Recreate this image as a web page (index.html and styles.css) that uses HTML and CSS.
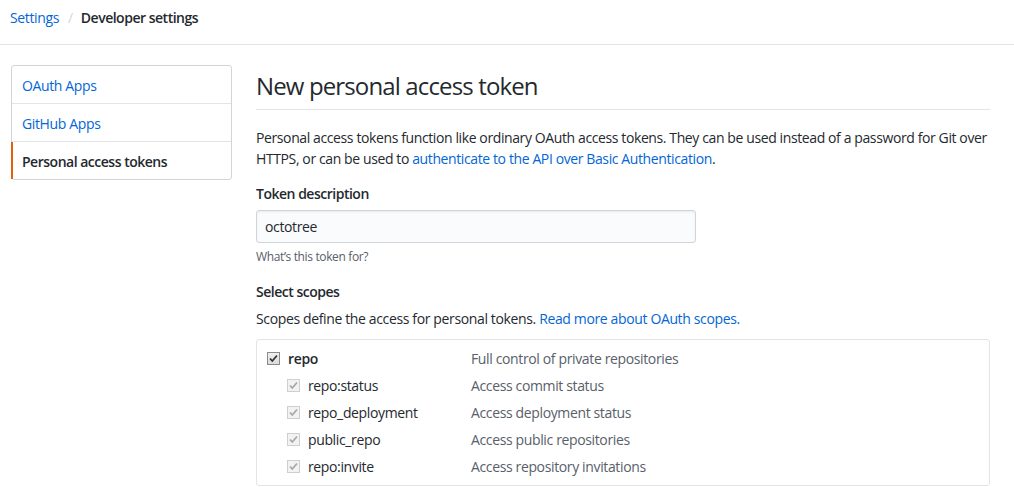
FILE: index.html
```html
<!DOCTYPE html>
<html>
<head>
<meta charset="utf-8">
<link rel="stylesheet" href="styles.css">
</head>
<body>
<div class="crumbs">
  <a class="crumb-link" href="#">Settings</a>
  <span class="sep">/</span>
  <span class="crumb-current">Developer settings</span>
</div>
<div class="layout">
  <nav class="menu">
    <a class="menu-item" href="#">OAuth Apps</a>
    <a class="menu-item" href="#">GitHub Apps</a>
    <a class="menu-item selected" href="#">Personal access tokens</a>
  </nav>
  <main class="main">
    <h2 class="title">New personal access token</h2>
    <p class="lead">Personal access tokens function like ordinary OAuth access tokens. They can be used instead of a password for Git over HTTPS, or can be used to <a href="#">authenticate to the API over Basic Authentication</a>.</p>
    <div class="field">
      <label class="label">Token description</label>
      <div class="input">octotree</div>
      <p class="note">What’s this token for?</p>
    </div>
    <div class="field">
      <label class="label">Select scopes</label>
      <p class="scope-help">Scopes define the access for personal tokens. <a href="#">Read more about OAuth scopes.</a></p>
    </div>
    <div class="scopes">
      <div class="scope-row">
        <span class="scope-name main-scope"><span class="cb"><svg viewBox="0 0 13 13" width="13" height="13"><path d="M3 6.5 L5.3 9 L10 3.5" fill="none" stroke="#333" stroke-width="1.8"/></svg></span>repo</span>
        <span class="scope-desc">Full control of private repositories</span>
      </div>
      <div class="scope-row">
        <span class="scope-name sub"><span class="cb dis"><svg viewBox="0 0 13 13" width="13" height="13"><path d="M3 6.5 L5.3 9 L10 3.5" fill="none" stroke="#a8a8a8" stroke-width="1.8"/></svg></span>repo:status</span>
        <span class="scope-desc">Access commit status</span>
      </div>
      <div class="scope-row">
        <span class="scope-name sub"><span class="cb dis"><svg viewBox="0 0 13 13" width="13" height="13"><path d="M3 6.5 L5.3 9 L10 3.5" fill="none" stroke="#a8a8a8" stroke-width="1.8"/></svg></span>repo_deployment</span>
        <span class="scope-desc">Access deployment status</span>
      </div>
      <div class="scope-row">
        <span class="scope-name sub"><span class="cb dis"><svg viewBox="0 0 13 13" width="13" height="13"><path d="M3 6.5 L5.3 9 L10 3.5" fill="none" stroke="#a8a8a8" stroke-width="1.8"/></svg></span>public_repo</span>
        <span class="scope-desc">Access public repositories</span>
      </div>
      <div class="scope-row">
        <span class="scope-name sub"><span class="cb dis"><svg viewBox="0 0 13 13" width="13" height="13"><path d="M3 6.5 L5.3 9 L10 3.5" fill="none" stroke="#a8a8a8" stroke-width="1.8"/></svg></span>repo:invite</span>
        <span class="scope-desc">Access repository invitations</span>
      </div>
    </div>
  </main>
</div>
</body>
</html>
```

FILE: styles.css
```css
* { box-sizing: border-box; }
html, body { margin: 0; padding: 0; background: #fff; }
body {
  font-family: "Open Sans", "Noto Sans", sans-serif;
  font-size: 14px;
  letter-spacing: -0.026em;
  color: #24292e;
  line-height: 1.5;
  overflow: hidden;
}
a { color: #0366d6; text-decoration: none; }
.crumbs {
  height: 45px;
  border-bottom: 1px solid #e1e4e8;
  padding: 6px 10px 0;
  font-size: 14px;
  line-height: 24px;
  display: flex;
}
.crumb-link { color: #0366d6; }
.sep { color: #d1d5da; margin: 0 8px 0 9px; }
.crumb-current { font-weight: 600; color: #24292e; letter-spacing: -0.035em; }
.layout {
  display: flex;
  padding: 20px 24px 0 11px;
  gap: 24px;
}
.menu {
  width: 221px;
  flex: none;
  border: 1px solid #d1d5da;
  border-radius: 3px;
  display: flex;
  flex-direction: column;
  align-self: flex-start;
}
.menu-item {
  display: block;
  height: 38px;
  padding: 1px 10px 0 10px;
  line-height: 37px;
  color: #0366d6;
  border-bottom: 1px solid #e1e4e8;
}
.menu-item:last-child { border-bottom: none; height: 37px; }
.menu-item.selected {
  color: #24292e;
  font-weight: 600;
  border-left: 2px solid #e36209;
  padding-left: 9px;
  margin-left: -1px;
  letter-spacing: -0.035em;
}
.main { flex: 1; min-width: 0; }
.title {
  font-size: 24px;
  font-weight: 400;
  letter-spacing: -0.036em;
  margin: 0;
  height: 45px;
  line-height: 41px;
  border-bottom: 1px solid #e1e4e8;
}
.lead { margin: 17px 0 0; line-height: 21px; letter-spacing: -0.028em; }
.field { margin-top: 14px; }
.label { display: block; font-weight: 600; line-height: 21px; margin-bottom: 6px; letter-spacing: -0.035em; }
.input {
  width: 440px;
  height: 33px;
  border: 1px solid #d1d5da;
  border-radius: 3px;
  background: #fafbfc;
  padding: 0 8px;
  line-height: 31px;
  box-shadow: inset 0 1px 2px rgba(27,31,35,0.075);
}
.note { margin: 4px 0 0; font-size: 12px; color: #586069; line-height: 20px; }
.field + .field { margin-top: 14px; }
.scope-help { margin: 0; line-height: 21px; }
.scopes {
  margin-top: 10px;
  border: 1px solid #e1e4e8;
  border-radius: 3px;
  padding: 5px 10px 0;
  height: 147px;
}
.scope-row {
  display: flex;
  height: 27px;
  align-items: center;
}
.scope-name {
  width: 204px;
  display: flex;
  align-items: center;
  gap: 8px;
}
.main-scope { font-weight: 600; }
.scope-name.sub { padding-left: 20px; }
.cb {
  width: 13px;
  height: 13px;
  border: 1px solid #8a8a8a;
  background: linear-gradient(#f0f0f0, #dcdcdc);
  display: inline-flex;
  flex: none;
}
.cb.dis { border-color: #cfcfcf; background: #f2f2f2; }
.cb svg { display: block; margin: -1px; }
.scope-desc { color: #586069; }
```
